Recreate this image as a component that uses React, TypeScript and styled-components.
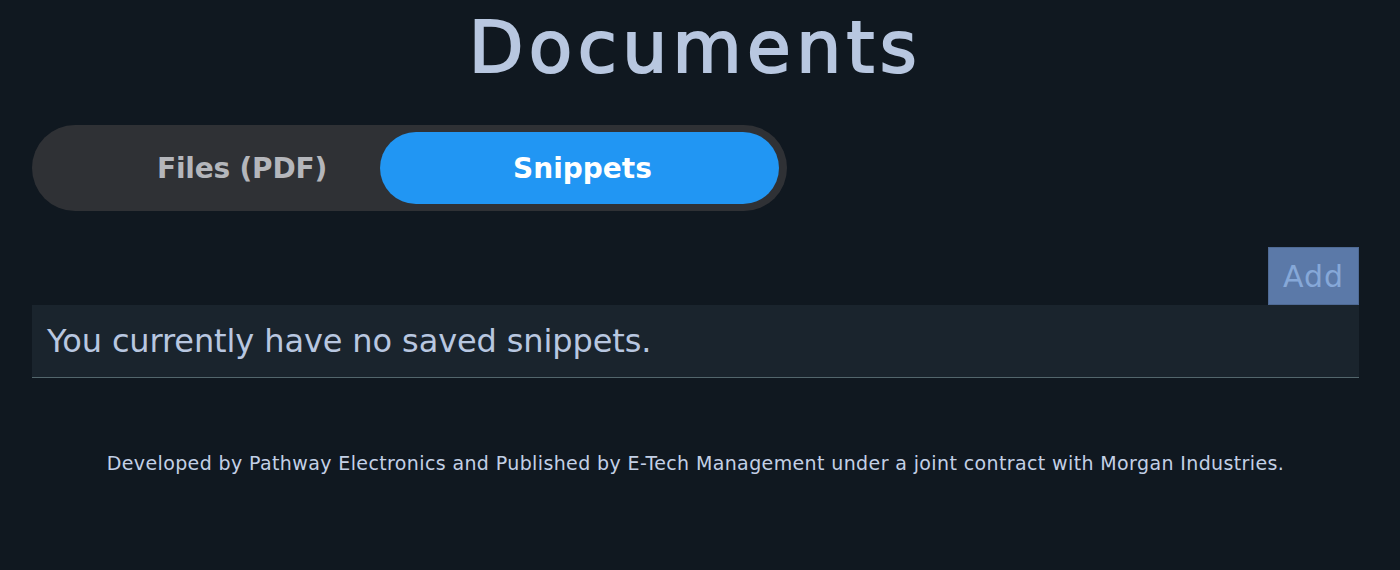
import styled, { createGlobalStyle } from "styled-components";

const GlobalStyle = createGlobalStyle`
  html, body {
    margin: 0;
    padding: 0;
    background: #101820;
  }
  body {
    font-family: "DejaVu Sans", "Noto Sans", sans-serif;
  }
`;

export default function App() {
  return (
    <>
      <GlobalStyle />
      <Page>
        <Title>Documents</Title>
        <Toggle>
          <FilesTab>Files (PDF)</FilesTab>
          <SnippetsTab>Snippets</SnippetsTab>
        </Toggle>
        <Actions>
          <AddButton>Add</AddButton>
        </Actions>
        <EmptyRow>You currently have no saved snippets.</EmptyRow>
        <Footer>
          Developed by Pathway Electronics and Published by E-Tech Management under a joint contract with Morgan
          Industries.
        </Footer>
      </Page>
    </>
  );
}

const Page = styled.div`
  width: 1327px;
  height: 570px;
  margin-left: 32px;
  display: flex;
  flex-direction: column;
  overflow: hidden;
`;

const Title = styled.h1`
  margin: 0;
  height: 125px;
  padding-top: 8px;
  box-sizing: border-box;
  text-align: center;
  font-size: 71px;
  line-height: 80px;
  font-weight: 400;
  letter-spacing: 5.4px;
  -webkit-text-stroke: 2px #b8c7e0;
  color: #b8c7e0;
`;

const Toggle = styled.div`
  width: 755px;
  height: 86px;
  box-sizing: border-box;
  padding: 7px 8px;
  border-radius: 43px;
  background: #2f3135;
  display: flex;
  justify-content: flex-end;
  font-size: 28px;
  font-weight: 700;
`;

const FilesTab = styled.div`
  width: 275px;
  display: flex;
  align-items: center;
  padding-right: 53px;
  box-sizing: border-box;
  justify-content: flex-end;
  color: #b4b6bb;
  letter-spacing: -0.2px;
`;

const SnippetsTab = styled.div`
  width: 399px;
  border-radius: 36px;
  background: #2196f3;
  color: #ffffff;
  display: flex;
  align-items: center;
  justify-content: center;
  padding-left: 6px;
  box-sizing: border-box;
`;

const Actions = styled.div`
  display: flex;
  justify-content: flex-end;
  margin-top: 36px;
`;

const AddButton = styled.button`
  width: 91px;
  height: 58px;
  padding: 0;
  border: 1px solid #4f6a94;
  background: #5b79a8;
  color: #86a8d8;
  font-family: inherit;
  font-size: 30px;
  letter-spacing: 1px;
`;

const EmptyRow = styled.div`
  height: 73px;
  box-sizing: border-box;
  padding: 0 15px;
  display: flex;
  align-items: center;
  background: #1a242d;
  border-bottom: 1px solid #53666c;
  color: #b8c7e0;
  font-size: 32px;
  letter-spacing: -0.11px;
`;

const Footer = styled.div`
  margin-top: 73px;
  text-align: center;
  font-size: 19px;
  line-height: 24px;
  letter-spacing: 0.38px;
  color: #c3d0e6;
`;
